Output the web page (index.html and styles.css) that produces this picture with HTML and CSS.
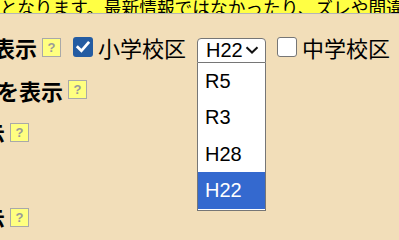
FILE: index.html
```html
<!DOCTYPE html>
<html lang="ja">
<head>
  <meta charset="UTF-8" />
  <meta name="viewport" content="width=device-width, initial-scale=1" />
  <title>学区マップ</title>
  <link rel="stylesheet" href="styles.css">
</head>
<body>
  <div class="notice">
    <span>となります。最新情報ではなかったり、ズレや間違いがある場合があります。</span>
  </div>

  <div class="row row-1">
    <span class="label">校区を表示</span>
    <span class="help">?</span>
    <label class="check">
      <span class="box checked">
        <svg viewBox="0 0 20 20" width="20" height="20"><path d="M4.8 10.2 L8.4 13.8 L15.2 6" fill="none" stroke="#fff" stroke-width="2.8" stroke-linecap="square"/></svg>
      </span>
      <span class="check-text">小学校区</span>
    </label>
    <div class="picker">
      <div class="select">
        <span>H22</span>
        <svg viewBox="0 0 14 8" width="14" height="8"><path d="M1.5 1.3 L7 6.5 L12.5 1.3" fill="none" stroke="#111" stroke-width="2"/></svg>
      </div>
      <ul class="menu">
        <li>R5</li>
        <li>R3</li>
        <li>H28</li>
        <li class="active">H22</li>
      </ul>
    </div>
    <label class="check">
      <span class="box"></span>
      <span class="check-text">中学校区</span>
    </label>
  </div>

  <div class="row row-2">
    <span class="label">地名を表示</span>
    <span class="help">?</span>
  </div>

  <div class="row row-3">
    <span class="label">境界線を表示</span>
    <span class="help">?</span>
  </div>

  <div class="row row-empty"></div>

  <div class="row row-3">
    <span class="label">鉄道駅を表示</span>
    <span class="help">?</span>
  </div>
</body>
</html>
```

FILE: styles.css
```css
body {
  margin: 0;
  background-color: #f2deb9;
  font-family: "Noto Sans CJK JP", sans-serif;
  color: #000;
  overflow: hidden;
}

.notice {
  height: 13px;
  background-color: #ffff44;
  border-bottom: 1px solid #b5b5b5;
  overflow: hidden;
  display: flex;
  align-items: flex-end;
  font-size: 17.7px;
  line-height: 18px;
  white-space: nowrap;
}

.notice span {
  margin-bottom: -3px;
}

.row {
  height: 42.5px;
  display: flex;
  align-items: center;
  white-space: nowrap;
}

.row-1 {
  margin-top: 12px;
  margin-left: -73px;
}

.row-2 {
  margin-left: -47px;
}

.row-3 {
  margin-left: -127px;
}

.label {
  font-size: 22px;
  font-weight: bold;
}

.help {
  width: 17px;
  height: 17px;
  margin-left: 5px;
  border: 1px solid #a9a9a9;
  background-color: #ffff80;
  color: #9a9a9a;
  font-family: "Liberation Sans", Arial, sans-serif;
  font-size: 13px;
  font-weight: bold;
  line-height: 17px;
  text-align: center;
}

.check {
  display: flex;
  align-items: center;
  margin-left: 12px;
}

.picker + .check {
  margin-left: 11px;
}

.box {
  width: 18px;
  height: 18px;
  border: 1px solid #767676;
  border-radius: 3px;
  background-color: #fff;
}

.box.checked {
  width: 20px;
  height: 20px;
  border: none;
  background-color: #245ca2;
}

.box svg {
  display: block;
}

.check-text {
  margin-left: 5px;
  font-size: 22px;
}

.picker {
  position: relative;
  margin-left: 11px;
  margin-top: 6px;
}

.select {
  box-sizing: border-box;
  width: 69px;
  height: 25px;
  padding: 0 6px 0 8px;
  border: 1px solid #767676;
  border-radius: 4px 4px 0 0;
  background-color: #fff;
  display: flex;
  align-items: center;
  justify-content: space-between;
  font-family: "Liberation Sans", Arial, sans-serif;
  font-size: 20px;
}

.menu {
  position: absolute;
  top: 25px;
  left: 0;
  box-sizing: border-box;
  width: 69px;
  margin: 0;
  padding: 0 0 1px 0;
  list-style: none;
  border: 1px solid #767676;
  border-top: none;
  background-color: #fff;
  font-family: "Liberation Sans", Arial, sans-serif;
  font-size: 20px;
}

.menu li {
  height: 36.5px;
  line-height: 36.5px;
  padding-left: 7px;
}

.menu li.active {
  background-color: #3469cf;
  color: #fff;
}
```
